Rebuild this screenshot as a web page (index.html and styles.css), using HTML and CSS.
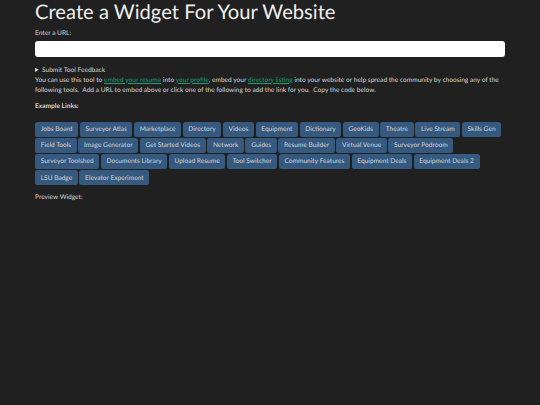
FILE: index.html
```html
<!DOCTYPE html>
<html lang="en">
<head>
    <meta charset="UTF-8">
    <title>Create a Widget For Your Website</title>
    <link rel="stylesheet" href="styles.css">
</head>
<body>
<div class="container">
    <h1>Create a Widget For Your Website</h1>

    <label class="url-label" for="url-input">Enter a URL:</label>
    <input type="text" id="url-input" class="url-input">

    <details class="feedback">
        <summary>Submit Tool Feedback</summary>
    </details>

    <p class="intro">You can use this tool to <a href="#">embed your resume</a> into <a href="#">your profile</a>, embed your <a href="#">directory listing</a> into your website or help spread the community by choosing any of the following tools.&nbsp; Add a URL to embed above or click one of the following to add the link for you.&nbsp; Copy the code below.</p>

    <p class="links-title">Example Links:</p>

    <div class="links">
        <button class="btn">Jobs Board</button>
        <button class="btn">Surveyor Atlas</button>
        <button class="btn">Marketplace</button>
        <button class="btn">Directory</button>
        <button class="btn">Videos</button>
        <button class="btn">Equipment</button>
        <button class="btn">Dictionary</button>
        <button class="btn">GeoKids</button>
        <button class="btn">Theatre</button>
        <button class="btn">Live Stream</button>
        <button class="btn">Skills Gen</button>
        <button class="btn">Field Tools</button>
        <button class="btn">Image Generator</button>
        <button class="btn">Get Started Videos</button>
        <button class="btn">Network</button>
        <button class="btn">Guides</button>
        <button class="btn">Resume Builder</button>
        <button class="btn">Virtual Venue</button>
        <button class="btn">Surveyor Podroom</button>
        <button class="btn">Surveyor Toolshed</button>
        <button class="btn">Documents Library</button>
        <button class="btn">Upload Resume</button>
        <button class="btn">Tool Switcher</button>
        <button class="btn">Community Features</button>
        <button class="btn">Equipment Deals</button>
        <button class="btn">Equipment Deals 2</button>
        <button class="btn">LSU Badge</button>
        <button class="btn">Elevator Experiment</button>
    </div>

    <p class="preview-title">Preview Widget:</p>
</div>
</body>
</html>
```

FILE: styles.css
```css
* {
    margin: 0;
    padding: 0;
    box-sizing: border-box;
}

body {
    font-family: Lato, sans-serif;
    background: #202020;
    color: #d4d4d4;
    font-size: 6.6px;
    text-rendering: geometricPrecision;
    min-height: 100vh;
    overflow: hidden;
}

.container {
    padding: 0 35px;
}

h1 {
    font-size: 20.2px;
    font-weight: 400;
    line-height: 25px;
    color: #eeeeee;
}

.url-label {
    display: block;
    margin-top: 3px;
    line-height: 10px;
}

.url-input {
    display: block;
    width: 100%;
    height: 16px;
    margin-top: 3px;
    background: white;
    border: none;
    border-radius: 3px;
}

.feedback {
    margin-top: 7.5px;
    line-height: 10px;
}

.intro {
    line-height: 10px;
}

.intro a {
    color: #1e9e70;
}

.links-title {
    margin-top: 6.5px;
    line-height: 10px;
    font-weight: 700;
}

.links {
    margin-top: 10.5px;
    display: flex;
    flex-wrap: wrap;
    column-gap: 1.5px;
    row-gap: 0.5px;
}

.btn {
    height: 15.6px;
    padding: 0 5.7px;
    background: #35597f;
    color: #d4d4d4;
    border: none;
    border-radius: 2.5px;
    font-family: Lato, sans-serif;
    font-size: 6.6px;
    text-rendering: geometricPrecision;
}

.preview-title {
    margin-top: 7px;
    line-height: 10px;
}
```
